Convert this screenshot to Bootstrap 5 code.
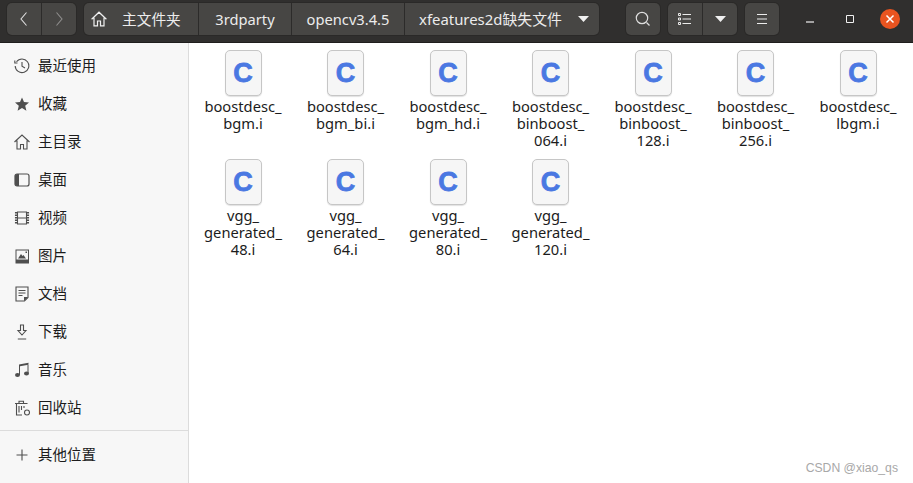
<!DOCTYPE html>
<html lang="zh-CN">
  <head>
    <meta charset="UTF-8" />
    <title>xfeatures2d缺失文件</title>
    <link
      href="https://cdn.jsdelivr.net/npm/bootstrap@5.3.3/dist/css/bootstrap.min.css"
      rel="stylesheet"
    />
    <style>
      body {
        font-family: "Noto Sans", "Noto Sans CJK SC", sans-serif;
        font-size: 14.7px;
        height: 483px;
        overflow: hidden;
        background: #fff;
        color: #1c1c1c;
      }

      /* header bar */
      .hdr {
        height: 43px;
        background: #302f2e;
        border-bottom: 1px solid #1f1e1d;
        padding: 3px 0 0 7px;
        color: #ececec;
      }
      .seg-group {
        height: 32px;
        flex: none;
        display: flex;
        background: #474644;
        border-radius: 5px;
        box-shadow: 0 0 0 1px #2a2928;
      }
      .seg {
        display: flex;
        align-items: center;
        justify-content: center;
        border-left: 1px solid #2c2b2a;
        line-height: 1;
      }
      .seg:first-child {
        border-left: 0;
      }
      .seg svg {
        display: block;
      }
      .back-group { width: 69px; margin-right: 8px; }
      .path-group { width: 515px; margin-right: 27px; }
      .search-group { width: 34px; margin-right: 8px; }
      .view-group { width: 69px; margin-right: 8px; }
      .menu-group { width: 34px; margin-right: 11px; }
      .w-34 { width: 34px; }
      .w-35 { width: 35px; }
      .crumb-home { width: 114px; gap: 15px; justify-content: flex-start; padding-left: 7px; }
      .crumb-a { width: 93px; }
      .crumb-b { width: 113px; }
      .crumb-c { width: 195px; gap: 16px; padding-left: 4px; font-size: 14.9px; }
      .win-btn {
        width: 40px;
        height: 32px;
        flex: none;
        display: flex;
        align-items: center;
        justify-content: center;
      }
      .win-close {
        width: 20px;
        height: 20px;
        border-radius: 50%;
        background: #e95420;
        display: flex;
        align-items: center;
        justify-content: center;
      }

      /* sidebar */
      .side {
        width: 189px;
        height: 440px;
        flex: none;
        background: #f7f7f7;
        border-right: 1px solid #dcdcdc;
        padding-top: 4px;
        font-size: 14.5px;
      }
      .side-item {
        height: 38px;
        display: flex;
        align-items: center;
        gap: 8px;
        padding-left: 14px;
      }
      .side-item svg {
        flex: none;
        display: block;
        color: #4f4f4f;
      }
      .side-sep {
        border-top: 1px solid #dcdcdc;
        margin: 3px 0 5px;
      }

      /* file grid */
      .files {
        display: grid;
        grid-template-columns: repeat(7, 102.5px);
        grid-auto-rows: 109px;
        padding: 7px 0 0 3px;
      }
      .file-cell {
        display: flex;
        flex-direction: column;
        align-items: center;
        text-align: center;
        line-height: 17px;
        margin-left: -0.5px;
      }
      .file-icon {
        width: 37px;
        height: 46px;
        border: 1px solid #c6c6c6;
        border-radius: 5px;
        background: #f6f6f6;
        box-shadow: 0 1px 1px rgba(0, 0, 0, 0.12);
        display: flex;
        align-items: center;
        justify-content: center;
        margin-bottom: 2px;
        font-family: "Liberation Sans", sans-serif;
        font-weight: 700;
        font-size: 27px;
        line-height: 1;
        color: #4a78e2;
        -webkit-text-stroke: 0.8px #4a78e2;
      }
      .watermark {
        position: absolute;
        right: 15px;
        bottom: 6px;
        font-family: "Liberation Sans", sans-serif;
        font-size: 12.2px;
        color: #a8a8a8;
      }
    </style>
  </head>
  <body>
    <div class="hdr d-flex">
      <div class="seg-group back-group">
        <div class="seg w-34">
          <svg width="16" height="16" viewBox="0 0 16 16" fill="none" stroke="#dedede" stroke-width="1.1"><path d="M10.500 1.500 5 8l5.500 6.500" /></svg>
        </div>
        <div class="seg w-35">
          <svg width="16" height="16" viewBox="0 0 16 16" fill="none" stroke="#8f8e8d" stroke-width="1.1"><path d="M5.500 1.500 11 8l-5.500 6.500" /></svg>
        </div>
      </div>
      <div class="seg-group path-group">
        <div class="seg crumb-home">
          <svg width="16" height="16" viewBox="0 0 16 16" fill="none" stroke="#f0f0f0" stroke-width="1.200"><path d="M.6 8.200 8 1.200l7.400 7M3 6.800v8h3.500V10h3v4.800H13v-8" /></svg>
          <span>主文件夹</span>
        </div>
        <div class="seg crumb-a">3rdparty</div>
        <div class="seg crumb-b">opencv3.4.5</div>
        <div class="seg crumb-c">
          <span>xfeatures2d缺失文件</span>
          <svg width="11" height="6" viewBox="0 0 11 6" fill="#f0f0f0"><path d="M0 0h11L5.500 6z" /></svg>
        </div>
      </div>
      <div class="seg-group search-group">
        <div class="seg w-100">
          <svg width="16" height="16" viewBox="0 0 16 16" fill="none" stroke="#dedede" stroke-width="1.200"><circle cx="7" cy="7" r="5.700" /><path d="m11.500 11.500 3 3" /></svg>
        </div>
      </div>
      <div class="seg-group view-group">
        <div class="seg w-34">
          <svg width="14" height="12" viewBox="0 0 14 12" fill="none" stroke="#ececec"><path d="M.5.500h2v2h-2zM.5 5h2v2h-2zM.5 9.500h2v2h-2zM4.500 1.500H13M4.500 6H13M4.500 10.500H13" /></svg>
        </div>
        <div class="seg w-35">
          <svg width="11" height="6" viewBox="0 0 11 6" fill="#f0f0f0"><path d="M0 0h11L5.500 6z" /></svg>
        </div>
      </div>
      <div class="seg-group menu-group">
        <div class="seg w-100">
          <svg width="12" height="10" viewBox="0 0 12 10" fill="none" stroke="#ececec"><path d="M1 .5h10M1 5h10M1 9.500h10" /></svg>
        </div>
      </div>
      <div class="win-btn">
        <svg width="10" height="10" viewBox="0 0 10 10" fill="none" stroke="#f0f0f0" stroke-width="1.200"><path d="M1 8h8" /></svg>
      </div>
      <div class="win-btn">
        <svg width="10" height="10" viewBox="0 0 10 10" fill="none" stroke="#f0f0f0"><path d="M1.500 1.500h7v7h-7z" /></svg>
      </div>
      <div class="win-btn">
        <div class="win-close">
          <svg width="10" height="10" viewBox="0 0 10 10" fill="none" stroke="#fff" stroke-width="1.500"><path d="m1.500 1.500 7 7m0-7-7 7" /></svg>
        </div>
      </div>
    </div>

    <div class="d-flex">
      <div class="side">
        <div class="side-item">
          <svg width="16" height="16" viewBox="0 0 16 16" fill="none" stroke="currentColor" stroke-width="1.100"><path d="M2.500 3.800A6.800 6.800 0 1 1 1.200 8" /><path d="M.8 2.500v2.500h2.700M8 4v4.300l3 1.700" /></svg>
          <span>最近使用</span>
        </div>
        <div class="side-item">
          <svg width="16" height="16" viewBox="0 0 16 16" fill="currentColor"><path d="m8 1.500 2 4.600 5 .4-3.800 3.300 1.200 4.900L8 12.100l-4.400 2.600 1.200-4.900L1 6.500l5-.4z" /></svg>
          <span>收藏</span>
        </div>
        <div class="side-item">
          <svg width="16" height="16" viewBox="0 0 16 16" fill="none" stroke="currentColor" stroke-width="1.100"><path d="M.5 8 8 1l7.500 7M3 6.500V15h3.500v-4.500h3V15H13V6.500" /></svg>
          <span>主目录</span>
        </div>
        <div class="side-item">
          <svg width="16" height="16" viewBox="0 0 16 16" fill="none" stroke="currentColor" stroke-width="1.200"><rect x="1" y="2" width="14" height="12" rx="2" /><path fill="currentColor" stroke="none" d="M3 2h2v12H3a2 2 0 0 1-2-2V4a2 2 0 0 1 2-2z" /></svg>
          <span>桌面</span>
        </div>
        <div class="side-item">
          <svg width="16" height="16" viewBox="0 0 16 16" fill="none" stroke="currentColor" stroke-width="1.100"><path d="M3.500 2h9v12h-9zM3.500 8h9" /><path stroke-width="2.500" stroke-dasharray="1.500 1" d="M2.200 2v12M13.800 2v12" /></svg>
          <span>视频</span>
        </div>
        <div class="side-item">
          <svg width="16" height="16" viewBox="0 0 16 16" fill="currentColor"><path d="M1.500 1.500h13.500v14H1.500zm1 1v9h11.500v-9z" fill-rule="evenodd" /><path d="M4 10.500 7 6l1.500 2 1-1 2.500 3.500zM11.500 3.500h1.500v1.500h-1.500z" /></svg>
          <span>图片</span>
        </div>
        <div class="side-item">
          <svg width="16" height="16" viewBox="0 0 16 16" fill="none" stroke="currentColor" stroke-width="1.100"><path d="M2 1h12v10.500L10.500 15H2zM4.500 4.500h7M4.500 7h7M4.500 9.500h4" /><path fill="currentColor" stroke="none" d="M10 11h4l-4 4z" /></svg>
          <span>文档</span>
        </div>
        <div class="side-item">
          <svg width="16" height="16" viewBox="0 0 16 16" fill="none" stroke="currentColor" stroke-width="1.100"><path d="M6.500 1h3v5.500H12L8 11 4 6.500h2.500zM3.800 15h8.400" /></svg>
          <span>下载</span>
        </div>
        <div class="side-item">
          <svg width="16" height="16" viewBox="0 0 16 16" fill="currentColor"><path d="M5 2.500 14.500.8v2L6 4.300V13H5zM13.500 1.500h1V11h-1z" /><ellipse cx="3.500" cy="13" rx="2.500" ry="2" /><ellipse cx="12.500" cy="11.500" rx="2.500" ry="2" /></svg>
          <span>音乐</span>
        </div>
        <div class="side-item">
          <svg width="16" height="16" viewBox="0 0 16 16" fill="none" stroke="currentColor" stroke-width="1.100"><path d="M1 3.500h12.500M5 3.500V1.200h4.500v2.300M2.500 3.500v11.500H8M5 6v6.500M7.500 6v4M10 6v2" /><circle cx="13" cy="12.500" r="2.500" /></svg>
          <span>回收站</span>
        </div>
        <div class="side-sep"></div>
        <div class="side-item">
          <svg width="16" height="16" viewBox="0 0 16 16" fill="none" stroke="currentColor" stroke-width="1.100"><path d="M8 2.500v11M2.500 8h11" /></svg>
          <span>其他位置</span>
        </div>
      </div>

      <div class="files flex-grow-1 align-content-start">
        <div class="file-cell"><div class="file-icon">C</div>boostdesc_<br />bgm.i</div>
        <div class="file-cell"><div class="file-icon">C</div>boostdesc_<br />bgm_bi.i</div>
        <div class="file-cell"><div class="file-icon">C</div>boostdesc_<br />bgm_hd.i</div>
        <div class="file-cell"><div class="file-icon">C</div>boostdesc_<br />binboost_<br />064.i</div>
        <div class="file-cell"><div class="file-icon">C</div>boostdesc_<br />binboost_<br />128.i</div>
        <div class="file-cell"><div class="file-icon">C</div>boostdesc_<br />binboost_<br />256.i</div>
        <div class="file-cell"><div class="file-icon">C</div>boostdesc_<br />lbgm.i</div>
        <div class="file-cell"><div class="file-icon">C</div>vgg_<br />generated_<br />48.i</div>
        <div class="file-cell"><div class="file-icon">C</div>vgg_<br />generated_<br />64.i</div>
        <div class="file-cell"><div class="file-icon">C</div>vgg_<br />generated_<br />80.i</div>
        <div class="file-cell"><div class="file-icon">C</div>vgg_<br />generated_<br />120.i</div>
      </div>
    </div>

    <div class="watermark">CSDN @xiao_qs</div>

    <script src="https://cdn.jsdelivr.net/npm/bootstrap@5.3.3/dist/js/bootstrap.bundle.min.js"></script>
  </body>
</html>
